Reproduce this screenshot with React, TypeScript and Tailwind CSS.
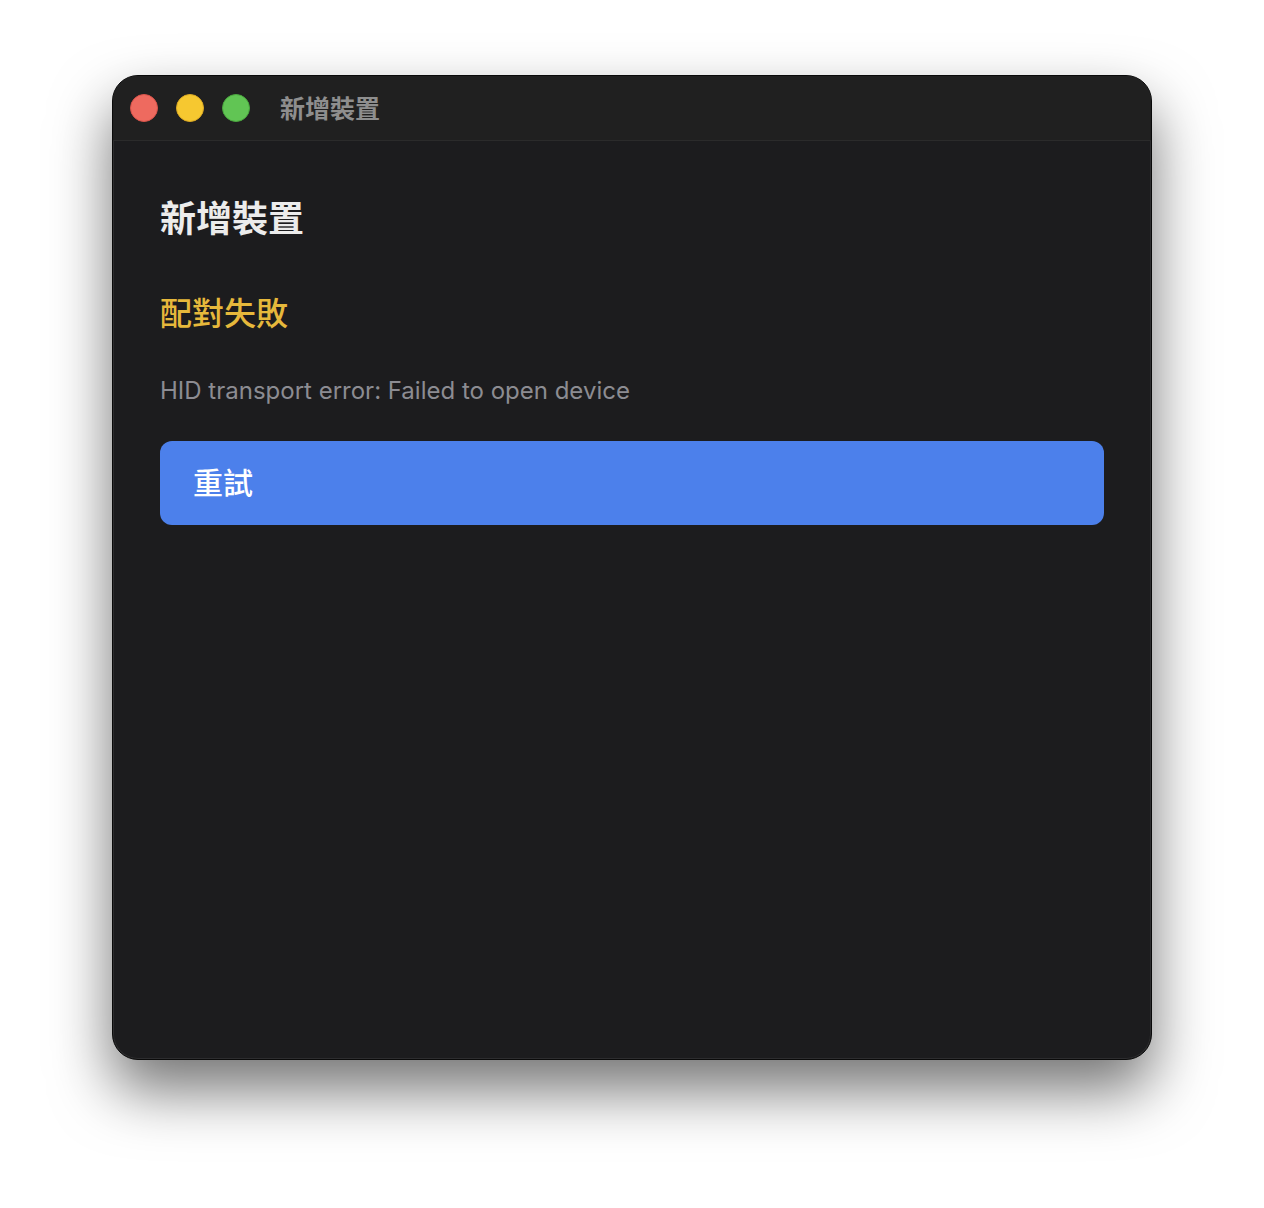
import React from "react";

export default function App() {
  return (
    <div className="w-[1264px] h-[1208px] bg-white pt-[75px] pl-[112px]">
      <div
        className="w-[1040px] h-[985px] rounded-[26px] overflow-hidden bg-[#1c1c1e] flex flex-col border border-[#0a0a0a] shadow-[0_30px_60px_rgba(0,0,0,0.55),0_0_0_1px_rgba(255,255,255,0.08)_inset]"
        style={{ fontFamily: 'Inter, "Noto Sans CJK TC", sans-serif' }}
      >
        <div className="h-[65px] shrink-0 bg-[#202020] border-b border-[#2b2b2b] flex items-center pl-[17px]">
          <div className="flex gap-[18px]">
            <span className="w-[28px] h-[28px] rounded-full bg-[#ee6a5f] border border-[#d9534a]" />
            <span className="w-[28px] h-[28px] rounded-full bg-[#f6c830] border border-[#dcaa24]" />
            <span className="w-[28px] h-[28px] rounded-full bg-[#61c554] border border-[#4aa63e]" />
          </div>
          <span className="ml-[30px] mt-[2px] text-[25px] font-bold text-[#8e8e8e] leading-none">新增裝置</span>
        </div>
        <div className="flex flex-col px-[47px] pt-[56px]">
          <h1 className="text-[36px] leading-[44px] font-bold text-[#ececec]">新增裝置</h1>
          <h2 className="mt-[53px] text-[32px] leading-[40px] font-medium text-[#e6b83b]">配對失敗</h2>
          <p className="mt-[42px] text-[24px] leading-[30px] text-[#8c8c92]">
            HID transport error: Failed to open device
          </p>
          <button className="mt-[35px] h-[84px] w-[944px] rounded-[12px] bg-[#4c80eb] text-left pl-[33px] text-[30px] font-medium text-white">
            重試
          </button>
        </div>
      </div>
    </div>
  );
}
